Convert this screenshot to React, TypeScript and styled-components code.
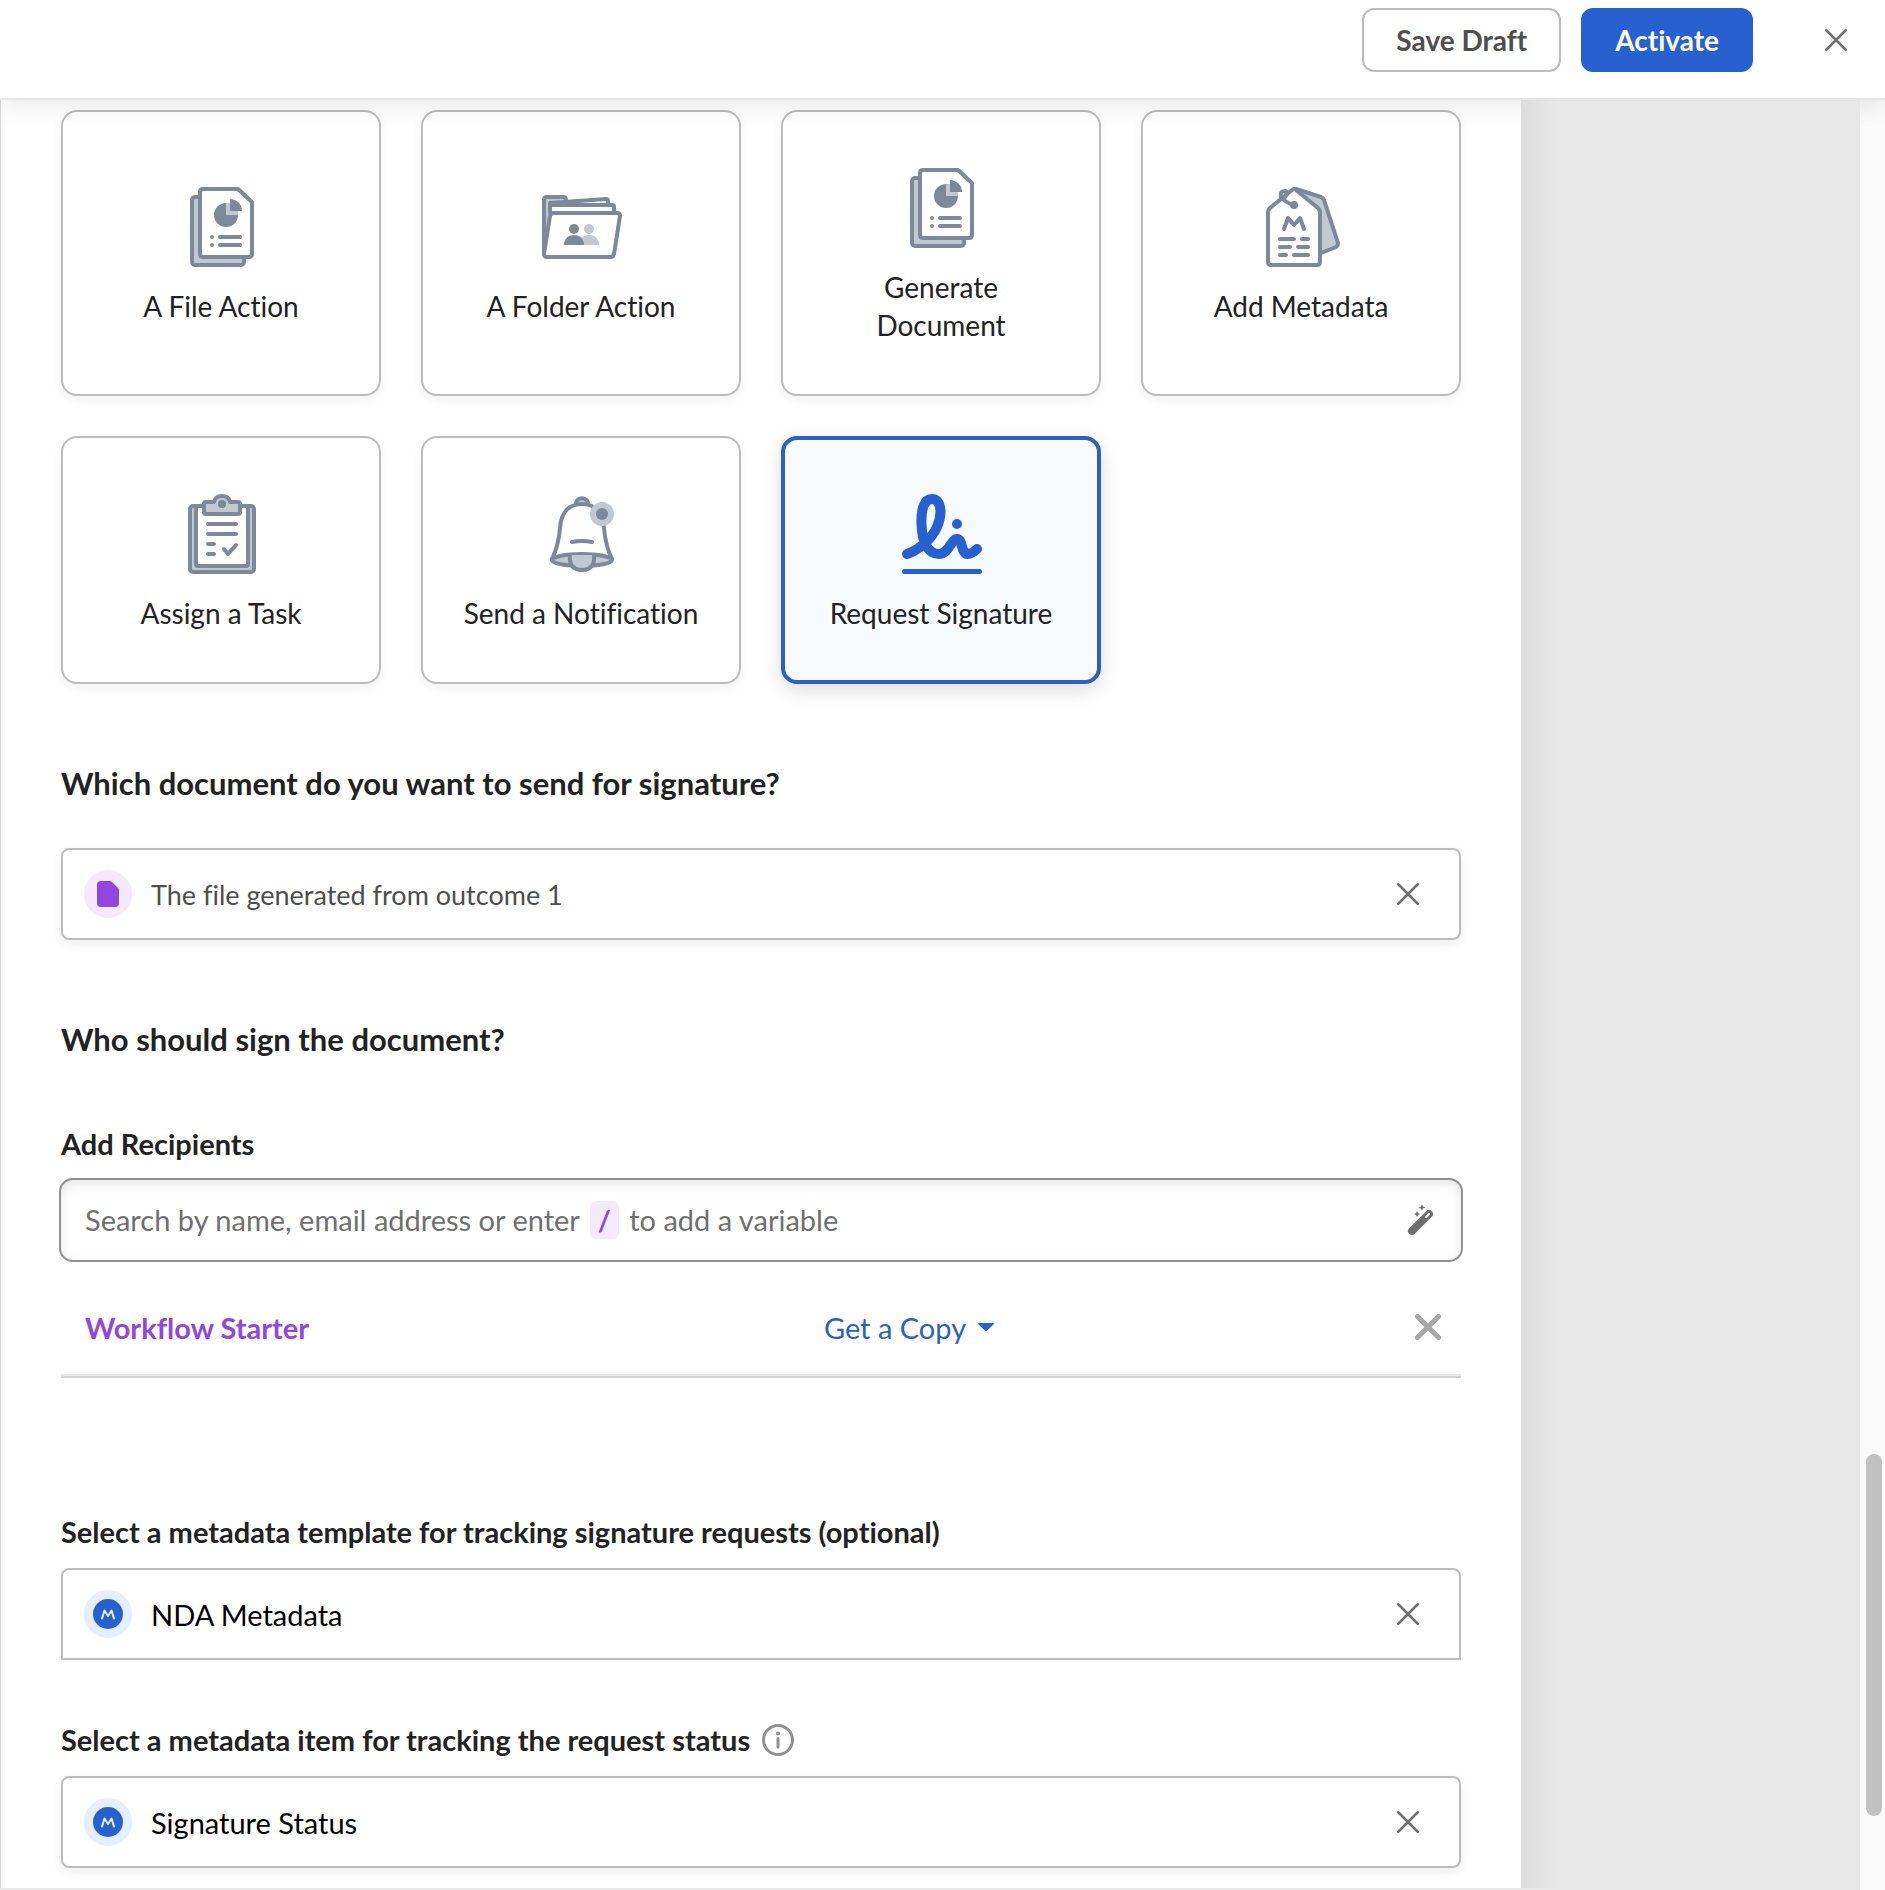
import React from "react";
import styled, { createGlobalStyle, css } from "styled-components";

const SLATE = "#7d8898";
const MIST = "#c1c8cf";
const BLUE = "#2860cf";
const PURPLE = "#9146dd";

const GlobalStyle = createGlobalStyle`
  *, *::before, *::after { box-sizing: border-box; }
  body { margin: 0; background: #fff; }
  body, button, input, select {
    font-family: Lato, "Open Sans", sans-serif;
    font-size: 29px;
    font-variant-ligatures: none;
  }
  button, select { cursor: pointer; }
`;

const Page = styled.div`
  display: flex;
  flex-direction: column;
  height: 100vh;
  overflow: hidden;
  color: #222;
`;

const Header = styled.header`
  position: relative;
  z-index: 1;
  display: flex;
  flex: none;
  align-items: center;
  justify-content: flex-end;
  gap: 20px;
  padding: 8px 38px 26px;
  background: #fff;
  border-bottom: 2px solid #e6e6e6;
  box-shadow: 0 4px 24px rgba(0, 0, 0, 0.1);
`;

const HeaderButton = styled.button<{ $primary?: boolean }>`
  height: 64px;
  padding: 0 32px;
  border: 2px solid ${(p) => (p.$primary ? BLUE : "#bcbcbc")};
  border-radius: 12px;
  background: ${(p) => (p.$primary ? BLUE : "#fff")};
  color: ${(p) => (p.$primary ? "#fff" : "#4e4e4e")};
  font-size: 28px;
  font-weight: 700;
`;

const IconButton = styled.button<{ $start?: number }>`
  display: grid;
  place-items: center;
  flex: none;
  margin-left: ${(p) => p.$start ?? 0}px;
  padding: 0;
  border: 0;
  background: none;
`;

const Workspace = styled.div`
  display: flex;
  flex: 1;
  min-height: 0;
  overflow: hidden;
  background: #e7e7e7;
  padding-bottom: 2px;
`;

const Panel = styled.main`
  flex: 1;
  min-width: 0;
  padding: 10px 60px 20px;
  background: #fff;
  border-left: 1px solid #d8d8d8;
`;

const Backdrop = styled.aside`
  position: relative;
  z-index: 2;
  flex: none;
  width: 339px;
  background: linear-gradient(to right, #dcdcdc, #e7e7e7 36px);
`;

const ScrollTrack = styled.div`
  flex: none;
  width: 25px;
  padding: 1354px 3px 0 6px;
  margin-bottom: -2px;
  background: #fafafa;
`;

const ScrollThumb = styled.div`
  height: 362px;
  border-radius: 8px;
  background: #c1c1c1;
`;

const CardGrid = styled.div`
  display: grid;
  grid-template-columns: repeat(4, 1fr);
  gap: 40px;
`;

const Card = styled.button<{ $selected?: boolean }>`
  display: flex;
  flex-direction: column;
  align-items: center;
  justify-content: center;
  gap: 20px;
  padding: 56px 38px 50px;
  border: 2px solid #bcbcbc;
  border-radius: 16px;
  background: #fff;
  box-shadow: 0 4px 12px rgba(0, 0, 0, 0.06);
  color: #222;
  font-size: 28px;
  line-height: 38px;
  ${(p) =>
    p.$selected &&
    css`
      padding: 54px 36px 48px;
      border: 4px solid #2e60bd;
      background: #f6fafd;
      box-shadow: 0 6px 20px rgba(0, 0, 0, 0.14);
    `}
`;

const CardIcon = styled.svg`
  display: block;
  width: 80px;
  height: 80px;
  flex: none;
  fill: none;
  overflow: visible;
`;

const Heading = styled.h2`
  margin: 80px 0 46px;
  font-size: 31px;
  font-weight: 700;
  line-height: 38px;
`;

const LabelRow = styled.div<{ $above: number }>`
  display: flex;
  align-items: center;
  gap: 12px;
  margin: ${(p) => p.$above}px 0 18px;
  font-weight: 700;
  line-height: 36px;
`;

const TokenBox = styled.div<{ $open?: boolean }>`
  display: flex;
  align-items: center;
  gap: 19px;
  height: 92px;
  padding: 0 40px 0 21px;
  border: 2px solid #bcbcbc;
  border-radius: ${(p) => (p.$open ? "8px 8px 0 0" : "8px")};
  background: #fff;
  box-shadow: ${(p) => (p.$open ? "none" : "0 4px 12px rgba(0, 0, 0, 0.07)")};
`;

const TokenBadge = styled.span<{ $tint: string }>`
  display: grid;
  place-items: center;
  width: 48px;
  height: 48px;
  border-radius: 50%;
  background: ${(p) => p.$tint};
`;

const TokenText = styled.span<{ $muted?: boolean }>`
  flex: 1;
  color: ${(p) => (p.$muted ? "#4e4e4e" : "#000")};
  font-size: ${(p) => (p.$muted ? 27 : 29)}px;
`;

const SearchField = styled.div`
  display: grid;
  align-items: center;
  height: 84px;
  margin: -2px;
  border: 2px solid #909090;
  border-radius: 14px;
  box-shadow: inset 0 4px 12px rgba(0, 0, 0, 0.1);
  > * {
    grid-area: 1 / 1;
  }
`;

const SearchInput = styled.input`
  width: 100%;
  height: 100%;
  padding: 0 80px 0 24px;
  border: 0;
  outline: 0;
  background: none;
  &:not(:placeholder-shown) + span {
    visibility: hidden;
  }
`;

const SearchHint = styled.span`
  padding-left: 24px;
  color: #6f6f6f;
  pointer-events: none;
`;

const SlashKey = styled.kbd`
  display: inline-block;
  margin: 0 3px;
  padding: 0 8px;
  border-radius: 6px;
  background: #f4eafc;
  color: ${PURPLE};
  font-family: inherit;
  font-size: 28px;
  font-weight: 700;
  line-height: 38px;
`;

const WandSlot = styled.span`
  display: flex;
  justify-self: end;
  padding-right: 26px;
`;

const RecipientRow = styled.div`
  display: grid;
  grid-template-columns: 5fr 4fr 26px;
  align-items: center;
  height: 96px;
  margin-top: 22px;
  padding: 0 20px 4px 24px;
  border-bottom: 2px solid #d3d3d3;
  box-shadow: inset 0 -2px 0 #e8e8e8;
`;

const RecipientName = styled.span`
  color: ${PURPLE};
  font-weight: 700;
`;

const RoleField = styled.div`
  display: flex;
  align-items: center;
  gap: 12px;
`;

const RoleSelect = styled.select`
  field-sizing: content;
  appearance: none;
  padding: 0;
  border: 0;
  background: none;
  color: #2e60bd;
`;

const SheetsIcon = () => (
  <CardIcon viewBox="0 0 80 80" aria-hidden="true">
    <g stroke={SLATE} strokeWidth="4" strokeLinejoin="round">
      <rect x="11" y="10" width="52" height="68" rx="3" fill={MIST} />
      <path d="M22 2H57L71 15V67Q71 70 68 70H22Q19 70 19 67V5Q19 2 22 2Z" fill="#fff" />
    </g>
    <circle cx="45" cy="28" r="12" fill={SLATE} />
    <path d="M45 28V16A12 12 0 0 1 57 28Z" fill={MIST} />
    <path d="M49 24V12A12 12 0 0 1 61 24Z" fill={SLATE} />
    <path d="M31 50h0M31 58h0M39 50H59M39 58H59" stroke={SLATE} strokeWidth="4" strokeLinecap="round" />
  </CardIcon>
);

const FolderIcon = () => (
  <CardIcon viewBox="0 0 80 80" aria-hidden="true">
    <g stroke={SLATE} strokeWidth="4" strokeLinejoin="round" strokeLinecap="round">
      <path d="M3 67V13Q3 10 6 10H22Q25 10 25 13V40L6 70Z" fill={MIST} />
      <path d="M9 22V16L65 12Q67 12 67 14L68 22Z" fill="#fff" />
      <path d="M9 26V18H71Q73 18 73 20V25" fill="#fff" />
      <path d="M12 26H76Q79 26 79 29L73 67Q72 70 70 70H6Q3 70 3 67L9 29Q10 26 12 26Z" fill="#fff" />
    </g>
    <g fill={MIST}>
      <circle cx="48" cy="42" r="5" />
      <path d="M38 58C38 52 42 48 48 48S58 52 58 58Z" />
    </g>
    <g fill={SLATE}>
      <circle cx="33" cy="42" r="5" />
      <path d="M23 58C23 52 27 48 33 48S43 52 43 58Z" />
    </g>
  </CardIcon>
);

const TagIcon = () => (
  <CardIcon viewBox="0 0 80 80" aria-hidden="true">
    <g stroke={SLATE} strokeWidth="4" strokeLinejoin="round" strokeLinecap="round">
      <path d="M35 2L60 10Q62 11 63 13L77 56Q77 59 75 60L60 66L40 40Z" fill={MIST} />
      <path d="M7 25Q7 23 9 21L31 3Q33 1 35 3L57 21Q59 23 59 25V75Q59 78 56 78H10Q7 78 7 75Z" fill="#fff" />
      <path d="M23 42L27 31L33 38L39 31L43 42" />
      <path d="M19 52H33M41 52H47M19 60H29M37 60H47M19 68H25M33 68H47" />
      <path d="M32 18C27 16 22 13 20 10C19 5 21 4 24 4C27 5 26 9 22 12" />
    </g>
    <circle cx="33" cy="18" r="4" fill={SLATE} />
  </CardIcon>
);

const ClipboardIcon = () => (
  <CardIcon viewBox="0 0 80 80" aria-hidden="true">
    <g stroke={SLATE} strokeWidth="4" strokeLinejoin="round" strokeLinecap="round">
      <rect x="9" y="12" width="64" height="66" rx="3" fill={MIST} />
      <path d="M15 12H67V70Q67 72 65 72H17Q15 72 15 70Z" fill="#fff" />
      <path d="M25 8H33C34 0 48 0 49 8H57Q59 8 59 10V18Q59 20 57 20H25Q23 20 23 18V10Q23 8 25 8Z" fill={MIST} />
      <path d="M27 30H55M27 40H55M27 50H33M27 60H33M43 55L47 60L55 51" />
    </g>
    <circle cx="41" cy="10" r="4" fill={SLATE} />
  </CardIcon>
);

const BellIcon = () => (
  <CardIcon viewBox="0 0 80 80" aria-hidden="true">
    <g stroke={SLATE} strokeWidth="4" strokeLinejoin="round" strokeLinecap="round">
      <path d="M35 11C34 2 48 2 47 11" fill={MIST} />
      <path d="M11 65C15 57 18 46 19 34C20 18 28 10 41 10S62 18 63 34C64 46 67 57 71 65" fill="#fff" />
      <path d="M31 48Q41 46 51 48" />
      <ellipse cx="41" cy="66" rx="30" ry="6" fill={MIST} />
      <path d="M29 61C28 69 31 76 41 76S54 69 53 61" fill={MIST} />
    </g>
    <circle cx="61" cy="20" r="12" fill={MIST} />
    <circle cx="61" cy="20" r="6" fill={SLATE} />
  </CardIcon>
);

const SignatureIcon = () => (
  <CardIcon viewBox="0 0 80 80" aria-hidden="true">
    <g stroke={BLUE} strokeLinecap="round" strokeLinejoin="round">
      <path
        d="M6 60C15 57 30 47 36 33C42 19 40 5 31 5C22 5 20 18 20.500 30C21 46 26 60 38 60C48 60 50 45 56 45C62 45 60 60 66.500 60C71 60 74 57 76 55"
        strokeWidth="10"
      />
      <path d="M3.500 77.500H78.500" strokeWidth="5" />
    </g>
    <circle cx="56" cy="30" r="5" fill={BLUE} />
  </CardIcon>
);

const CrossIcon = ({ size = 22, color = "#6f6f6f", weight = 2.5 }: { size?: number; color?: string; weight?: number }) => (
  <svg width={size} height={size} viewBox={`0 0 ${size} ${size}`} aria-hidden="true">
    <path
      d={`M${weight / 2} ${weight / 2}L${size - weight / 2} ${size - weight / 2}M${size - weight / 2} ${weight / 2}L${weight / 2} ${size - weight / 2}`}
      stroke={color}
      strokeWidth={weight}
      strokeLinecap="round"
    />
  </svg>
);

const FileGlyph = () => (
  <svg width="22" height="26" viewBox="0 0 22 26" aria-hidden="true">
    <path d="M4 0H14L22 8V22Q22 26 18 26H4Q0 26 0 22V4Q0 0 4 0Z" fill={PURPLE} />
  </svg>
);

const MetadataGlyph = () => (
  <svg width="30" height="30" viewBox="0 0 30 30" fill="none" aria-hidden="true">
    <circle cx="15" cy="15" r="15" fill={BLUE} />
    <path
      d="M9 19.500L11.500 11.500L15 17L18.500 11.500L21 19.500"
      stroke="#e5effa"
      strokeWidth="2"
      strokeLinecap="round"
      strokeLinejoin="round"
    />
  </svg>
);

const WandIcon = () => (
  <svg width="28" height="32" viewBox="0 0 28 32" aria-hidden="true">
    <path d="M5 27L22 10" stroke="#6f6f6f" strokeWidth="8" strokeLinecap="round" />
    <path d="M19 13L22 10" stroke="#fff" strokeWidth="2" strokeLinecap="round" />
    <path d="M15 0L16 2.500L18.500 3.500L16 4.500L15 7L14 4.500L11.500 3.500L14 2.500ZM10 7L11 9L13 10L11 11L10 13L9 11L7 10L9 9Z" fill="#6f6f6f" />
  </svg>
);

const CaretIcon = () => (
  <svg width="16" height="8" viewBox="0 0 16 8" aria-hidden="true">
    <path d="M1 0H15Q16.500 0 15.500 1.500L9 7.500Q8 8.500 7 7.500L0.500 1.500Q-0.500 0 1 0Z" fill={BLUE} />
  </svg>
);

const InfoIcon = () => (
  <svg width="32" height="32" viewBox="0 0 32 32" fill="none" aria-hidden="true">
    <circle cx="16" cy="16" r="14.500" stroke="#909090" strokeWidth="3" />
    <path d="M16 14.500V23" stroke="#909090" strokeWidth="3" strokeLinecap="round" />
    <circle cx="16" cy="9.500" r="2" fill="#909090" />
  </svg>
);

const actions = [
  { name: "A File Action", Icon: SheetsIcon },
  { name: "A Folder Action", Icon: FolderIcon },
  { name: "Generate Document", Icon: SheetsIcon },
  { name: "Add Metadata", Icon: TagIcon },
  { name: "Assign a Task", Icon: ClipboardIcon },
  { name: "Send a Notification", Icon: BellIcon },
  { name: "Request Signature", Icon: SignatureIcon, selected: true },
];

type TokenProps = { text: string; kind: "file" | "metadata"; open?: boolean };

const Token = ({ text, kind, open }: TokenProps) => (
  <TokenBox $open={open}>
    <TokenBadge $tint={kind === "file" ? "#f4eafc" : "#e5effa"}>
      {kind === "file" ? <FileGlyph /> : <MetadataGlyph />}
    </TokenBadge>
    <TokenText $muted={kind === "file"}>{text}</TokenText>
    <IconButton type="button" aria-label={`Remove ${text}`}>
      <CrossIcon />
    </IconButton>
  </TokenBox>
);

export default function App() {
  return (
    <>
      <GlobalStyle />
      <Page>
        <Header>
          <HeaderButton type="button">Save Draft</HeaderButton>
          <HeaderButton type="button" $primary>
            Activate
          </HeaderButton>
          <IconButton type="button" aria-label="Close" $start={52}>
            <CrossIcon />
          </IconButton>
        </Header>
        <Workspace>
          <Panel>
            <CardGrid>
              {actions.map(({ name, Icon, selected }) => (
                <Card key={name} type="button" aria-pressed={!!selected} $selected={selected}>
                  <Icon />
                  {name}
                </Card>
              ))}
            </CardGrid>

            <Heading>Which document do you want to send for signature?</Heading>
            <Token kind="file" text="The file generated from outcome 1" />

            <Heading>Who should sign the document?</Heading>
            <LabelRow $above={68}>
              <label htmlFor="recipients">Add Recipients</label>
            </LabelRow>
            <SearchField>
              <SearchInput id="recipients" type="text" placeholder=" " />
              <SearchHint>
                Search by name, email address or enter <SlashKey>/</SlashKey> to add a variable
              </SearchHint>
              <WandSlot>
                <IconButton type="button" aria-label="Insert a variable">
                  <WandIcon />
                </IconButton>
              </WandSlot>
            </SearchField>
            <RecipientRow>
              <RecipientName>Workflow Starter</RecipientName>
              <RoleField>
                <RoleSelect aria-label="Role of Workflow Starter" defaultValue="Get a Copy">
                  <option>Get a Copy</option>
                </RoleSelect>
                <CaretIcon />
              </RoleField>
              <IconButton type="button" aria-label="Remove Workflow Starter">
                <CrossIcon size={26} color="#a7a7a7" weight={5} />
              </IconButton>
            </RecipientRow>

            <LabelRow $above={136}>Select a metadata template for tracking signature requests (optional)</LabelRow>
            <Token kind="metadata" text="NDA Metadata" open />
            <LabelRow $above={62}>
              Select a metadata item for tracking the request status
              <IconButton type="button" aria-label="About the request status">
                <InfoIcon />
              </IconButton>
            </LabelRow>
            <Token kind="metadata" text="Signature Status" />
          </Panel>
          <Backdrop />
          <ScrollTrack>
            <ScrollThumb />
          </ScrollTrack>
        </Workspace>
      </Page>
    </>
  );
}
